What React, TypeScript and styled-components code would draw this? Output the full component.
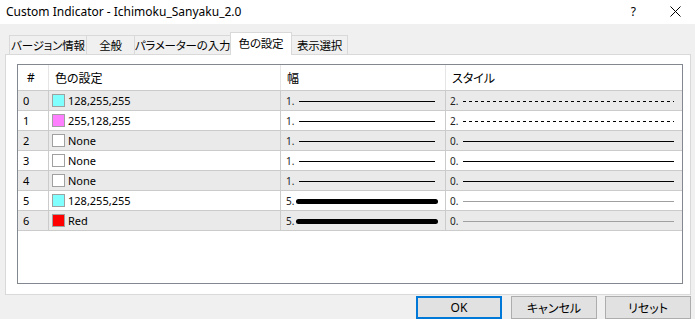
import React from "react";
import styled, { createGlobalStyle } from "styled-components";

const GlobalStyle = createGlobalStyle`
  html, body {
    margin: 0;
    padding: 0;
    background: #f0f0f0;
    width: 695px;
    height: 319px;
    overflow: hidden;
  }
  body {
    font-family: "Noto Sans", "Noto Sans CJK JP", sans-serif;
    font-size: 12px;
    color: #000;
    font-feature-settings: "palt";
  }
`;

const Window = styled.div`
  display: flex;
  flex-direction: column;
  width: 695px;
  height: 319px;
`;

const TitleBar = styled.div`
  display: flex;
  align-items: flex-start;
  justify-content: space-between;
  height: 26px;
  background: #ffffff;
  padding-left: 6px;
  box-sizing: border-box;
`;

const Title = styled.div`
  line-height: 23px;
  font-size: 12px;
  white-space: nowrap;
`;

const TitleButtons = styled.div`
  display: flex;
  align-items: center;
  height: 23px;
  gap: 34px;
  padding-right: 14px;
`;

const HelpGlyph = styled.span`
  font-size: 12px;
  line-height: 23px;
`;

const Body = styled.div`
  display: flex;
  flex-direction: column;
  padding: 8px 4px 0 5px;
`;

const TabStrip = styled.div`
  display: flex;
  align-items: flex-end;
  height: 22px;
  padding-left: 4px;
`;

const Tab = styled.div<{ $w: number; $active?: boolean }>`
  display: flex;
  align-items: center;
  justify-content: center;
  flex-shrink: 0;
  box-sizing: border-box;
  width: ${(p) => p.$w}px;
  height: ${(p) => (p.$active ? 23 : 19)}px;
  margin-bottom: ${(p) => (p.$active ? -1 : 0)}px;
  margin-left: -1px;
  border: 1px solid #d9d9d9;
  border-bottom: none;
  background: ${(p) => (p.$active ? "#ffffff" : "#f0f0f0")};
  position: relative;
  z-index: ${(p) => (p.$active ? 1 : 0)};
  padding-bottom: ${(p) => (p.$active ? 2 : 0)}px;
  font-size: 11.5px;
  letter-spacing: -0.2px;
  white-space: nowrap;
  overflow: hidden;

  &:first-child {
    margin-left: 0;
  }
`;

const Panel = styled.div`
  width: 686px;
  height: 241px;
  box-sizing: border-box;
  border: 1px solid #d9d9d9;
  background: #ffffff;
  padding: 9px 0 0 11px;
`;

const ListView = styled.div`
  width: 666px;
  height: 220px;
  box-sizing: border-box;
  border: 1px solid #828790;
  background: #ffffff;
`;

const Row = styled.div<{ $header?: boolean; $shade?: boolean }>`
  display: grid;
  grid-template-columns: 31px 232px 165px 1fr;
  height: ${(p) => (p.$header ? 26 : 20)}px;
  box-sizing: border-box;
  border-bottom: 1px solid #cbcbcb;
  background: ${(p) => (p.$shade ? "#eaeaea" : "#ffffff")};
`;

const Cell = styled.div<{ $header?: boolean; $pad: number; $last?: boolean }>`
  display: flex;
  align-items: center;
  box-sizing: border-box;
  padding-left: ${(p) => p.$pad}px;
  border-right: ${(p) =>
    p.$last ? "none" : `1px solid ${p.$header ? "#e5e5e5" : "#cbcbcb"}`};
  white-space: nowrap;
  overflow: hidden;
  font-size: ${(p) => (p.$header ? 12 : 11)}px;
`;

const Swatch = styled.span<{ $fill: string }>`
  width: 13px;
  height: 13px;
  box-sizing: border-box;
  border: 1px solid #a0a0a0;
  background: ${(p) => p.$fill};
  margin-right: 3px;
  flex-shrink: 0;
`;

const SmallLabel = styled.span`
  font-size: 10px;
  color: #222;
`;

const WidthLine = styled.span<{ $thick?: boolean }>`
  flex: 1;
  height: ${(p) => (p.$thick ? 5 : 1)}px;
  border-radius: ${(p) => (p.$thick ? 3 : 0)}px;
  background: #000;
  margin: 1px ${(p) => (p.$thick ? 7 : 10)}px 0 ${(p) => (p.$thick ? 2 : 5)}px;
`;

const StyleLine = styled.span<{ $kind: "dash" | "solid" | "thin" }>`
  flex: 1;
  height: 1px;
  margin: 1px 8px 0 5px;
  background: ${(p) =>
    p.$kind === "dash"
      ? "linear-gradient(to right, #000 50%, transparent 50%)"
      : p.$kind === "solid"
      ? "#000"
      : "#a0a0a0"};
  background-size: ${(p) => (p.$kind === "dash" ? "6px 1px" : "auto")};
`;

const ButtonRow = styled.div`
  display: flex;
  justify-content: flex-end;
  margin-top: 1px;
  width: 686px;
`;

const DialogButton = styled.div<{ $primary?: boolean; $gap: number }>`
  display: flex;
  align-items: center;
  justify-content: center;
  width: 86px;
  height: 23px;
  box-sizing: border-box;
  margin-left: ${(p) => p.$gap}px;
  background: #e1e1e1;
  border: ${(p) => (p.$primary ? "2px solid #0078d7" : "1px solid #adadad")};
  font-size: 12px;
`;

type StyleKind = "dash" | "solid" | "thin";

type Buffer = {
  id: number;
  color: string | null;
  label: string;
  width: number;
  style: number;
  kind: StyleKind;
};

const buffers: Buffer[] = [
  { id: 0, color: "#80ffff", label: "128,255,255", width: 1, style: 2, kind: "dash" },
  { id: 1, color: "#ff80ff", label: "255,128,255", width: 1, style: 2, kind: "dash" },
  { id: 2, color: null, label: "None", width: 1, style: 0, kind: "solid" },
  { id: 3, color: null, label: "None", width: 1, style: 0, kind: "solid" },
  { id: 4, color: null, label: "None", width: 1, style: 0, kind: "solid" },
  { id: 5, color: "#80ffff", label: "128,255,255", width: 5, style: 0, kind: "thin" },
  { id: 6, color: "#ff0000", label: "Red", width: 5, style: 0, kind: "thin" },
];

const tabs = [
  { label: "バージョン情報", w: 78 },
  { label: "全般", w: 49 },
  { label: "パラメーターの入力", w: 97 },
  { label: "色の設定", w: 62, active: true },
  { label: "表示選択", w: 57 },
];

const CloseIcon = () => (
  <svg width="11" height="11" viewBox="0 0 11 11">
    <path d="M0.5 0.5 L10.5 10.5 M10.5 0.5 L0.5 10.5" stroke="#000" strokeWidth="1" />
  </svg>
);

const App = () => {
  return (
    <>
      <GlobalStyle />
      <Window>
        <TitleBar>
          <Title>Custom Indicator - Ichimoku_Sanyaku_2.0</Title>
          <TitleButtons>
            <HelpGlyph>?</HelpGlyph>
            <CloseIcon />
          </TitleButtons>
        </TitleBar>
        <Body>
          <TabStrip>
            {tabs.map((t) => (
              <Tab key={t.label} $w={t.w} $active={t.active}>
                {t.label}
              </Tab>
            ))}
          </TabStrip>
          <Panel>
            <ListView>
              <Row $header>
                <Cell $header $pad={9}>#</Cell>
                <Cell $header $pad={6}>色の設定</Cell>
                <Cell $header $pad={6}>幅</Cell>
                <Cell $header $pad={6} $last>スタイル</Cell>
              </Row>
              {buffers.map((b) => (
                <Row key={b.id} $shade={b.id % 2 === 0}>
                  <Cell $pad={5}>{b.id}</Cell>
                  <Cell $pad={3}>
                    <Swatch $fill={b.color ?? "#ffffff"} />
                    {b.label}
                  </Cell>
                  <Cell $pad={5}>
                    <SmallLabel>{b.width}.</SmallLabel>
                    <WidthLine $thick={b.width > 1} />
                  </Cell>
                  <Cell $pad={4} $last>
                    <SmallLabel>{b.style}.</SmallLabel>
                    <StyleLine $kind={b.kind} />
                  </Cell>
                </Row>
              ))}
            </ListView>
          </Panel>
          <ButtonRow>
            <DialogButton $primary $gap={0}>OK</DialogButton>
            <DialogButton $gap={9}>キャンセル</DialogButton>
            <DialogButton $gap={8}>リセット</DialogButton>
          </ButtonRow>
        </Body>
      </Window>
    </>
  );
};

export default App;
